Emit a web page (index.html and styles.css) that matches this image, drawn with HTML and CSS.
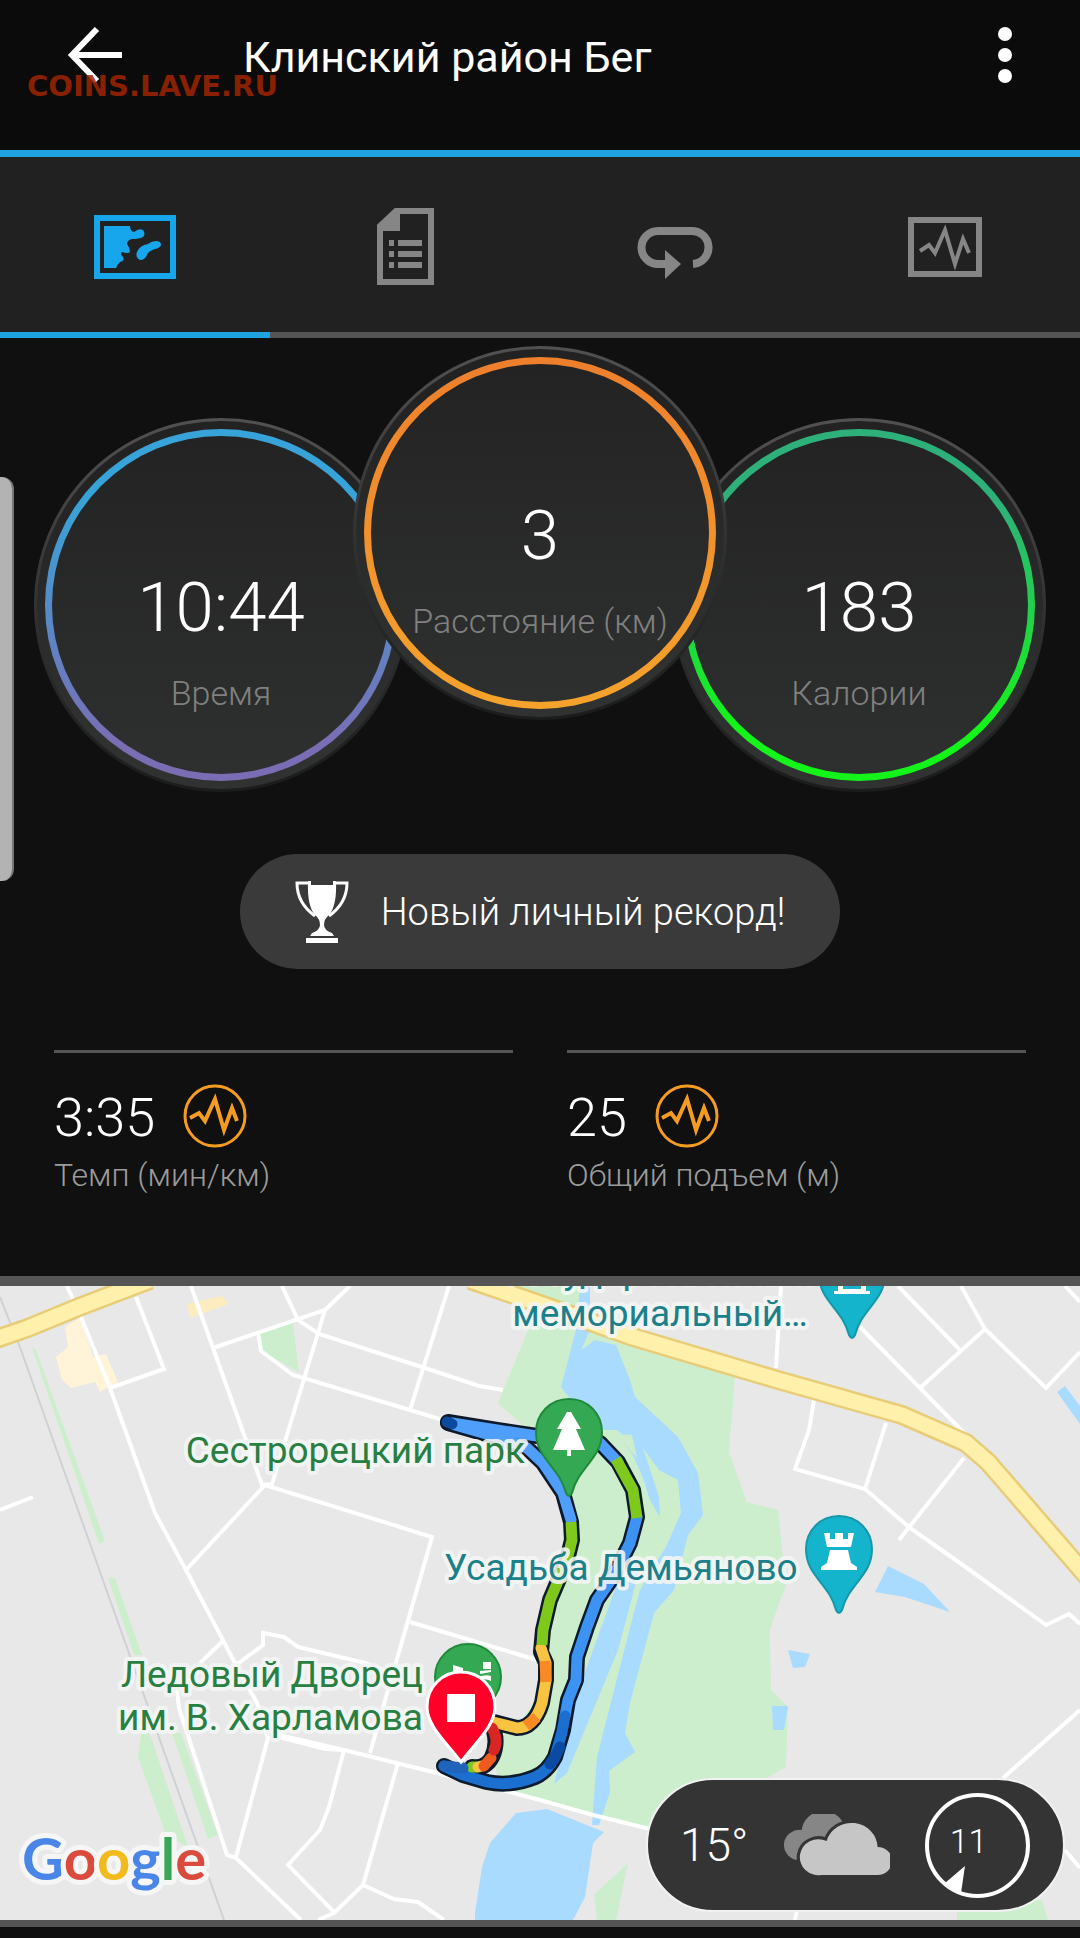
FILE: index.html
```html
<!DOCTYPE html>
<html lang="ru">
<head>
    <meta charset="UTF-8">
    <meta name="viewport" content="width=device-width, initial-scale=1.0">
    <title>Клинский район Бег</title>
    <link rel="stylesheet" href="styles.css">
</head>
<body>
    <header class="header">
        <button class="icon-button" aria-label="Назад">
            <svg width="56" height="56" viewBox="0 0 56 56" fill="none" stroke="#fff" stroke-width="6">
                <path d="M30 2L5 28L30 54M5 28H55"/>
            </svg>
        </button>
        <h1 class="title">Клинский район Бег</h1>
        <button class="icon-button" aria-label="Меню">
            <svg width="14" height="56" viewBox="0 0 14 56" fill="#fff">
                <circle cx="7" cy="7" r="7"/>
                <circle cx="7" cy="28" r="7"/>
                <circle cx="7" cy="49" r="7"/>
            </svg>
        </button>
        <span class="watermark">COINS.LAVE.RU</span>
    </header>

    <nav class="tabs">
        <button class="tab active" aria-label="Карта">
            <svg width="82" height="64" viewBox="0 0 82 64">
                <rect x="3" y="3" width="76" height="58" fill="none" stroke="currentColor" stroke-width="6"/>
                <path fill="currentColor" d="M10 11H36Q36 16 40 17Q45 13 49 15Q52 19 49 22Q45 24 38 24Q33 25 33 29Q36 33 36 37Q34 39 28 37Q26 39 29 42Q31 46 26 47Q23 50 22 53H10Z"/>
                <path fill="currentColor" d="M62 26Q67 26 67 30Q66 33 61 34Q54 36 53 40Q51 45 46 45Q41 42 43 37Q46 30 54 29Q58 26 62 26Z"/>
            </svg>
        </button>
        <button class="tab" aria-label="Статистика">
            <svg width="57" height="77" viewBox="0 0 57 77">
                <path fill="none" stroke="currentColor" stroke-width="6" d="M19 3H54V74H3V18Z"/>
                <path fill="currentColor" d="M18 2H23V23H1V18Z"/>
                <path fill="none" stroke="currentColor" stroke-width="6" d="M12 35H17M21 35H45M12 46H17M21 46H45M12 57H17M21 57H45"/>
            </svg>
        </button>
        <button class="tab" aria-label="Круги">
            <svg width="77" height="64" viewBox="1 -12 77 64">
                <path fill="none" stroke="currentColor" stroke-width="8" d="M35 37H22A16 16 0 0 1 22 4H55A16 16 0 0 1 57 37"/>
                <path fill="currentColor" d="M29 23L45 37L29 52Z"/>
            </svg>
        </button>
        <button class="tab" aria-label="Графики">
            <svg width="74" height="60" viewBox="0 0 74 60">
                <rect x="3" y="3" width="68" height="54" fill="none" stroke="currentColor" stroke-width="6"/>
                <path fill="none" stroke="currentColor" stroke-width="4" d="M12 34L21 28L27 36L37 13L47 47L55 22L61 36"/>
            </svg>
        </button>
    </nav>

    <main>
        <section class="gauges">
            <div class="gauge time">
                <div class="ring"></div>
                <div class="gauge-value">10:44</div>
                <div class="gauge-label">Время</div>
            </div>
            <div class="gauge distance">
                <div class="ring"></div>
                <div class="gauge-value">3</div>
                <div class="gauge-label">Расстояние (км)</div>
            </div>
            <div class="gauge calories">
                <div class="ring"></div>
                <div class="gauge-value">183</div>
                <div class="gauge-label">Калории</div>
            </div>
        </section>

        <button class="record">
            <svg width="54" height="62" viewBox="0 0 54 62">
                <path fill="none" stroke="#fff" stroke-width="3" d="M15 2H2Q2 22 20 35M39 2H52Q52 22 34 35"/>
                <path fill="#fff" d="M13 0H16V4H38V0H41Q42 25 34 34Q29 38 29 44Q29 49 37 52L39 55H15L17 52Q25 49 25 44Q25 38 20 34Q12 25 13 0Z"/>
                <rect fill="#fff" x="11" y="57" width="32" height="5"/>
            </svg>
            Новый личный рекорд!
        </button>

        <section class="metrics">
            <div class="metric">
                <div class="metric-row">
                    <span class="metric-value">3:35</span>
                    <svg width="64" height="64" viewBox="0 0 64 64" fill="none" stroke="#f59c20" stroke-width="3">
                        <circle cx="32" cy="32" r="30"/>
                        <path stroke-width="4" d="M7 34L16 29L22 37L32 15L41 46L49 24L54 37"/>
                    </svg>
                </div>
                <div class="metric-label">Темп (мин/км)</div>
            </div>
            <div class="metric">
                <div class="metric-row">
                    <span class="metric-value">25</span>
                    <svg width="64" height="64" viewBox="0 0 64 64" fill="none" stroke="#f59c20" stroke-width="3">
                        <circle cx="32" cy="32" r="30"/>
                        <path stroke-width="4" d="M7 34L16 29L22 37L32 15L41 46L49 24L54 37"/>
                    </svg>
                </div>
                <div class="metric-label">Общий подъем (м)</div>
            </div>
        </section>

        <section class="map">
            <svg class="map-canvas" viewBox="0 1286 1080 634">
                <defs>
                    <path id="pin" d="M0 -33C19 -33 33 -18 33 0C33 27 10 34 3 61Q0 67 -3 61C-10 34 -33 27 -33 0C-33 -18 -19 -33 0 -33Z"/>
                </defs>

                <!-- buildings and parks -->
                <g fill="#fff4d8">
                    <path d="M65 1327L81 1317L93 1357L106 1354L118 1382L100 1392L95 1382L71 1388L62 1380L56 1357L68 1347Z"/>
                    <path fill="#fcecc0" d="M187 1304L222 1296L229 1304L190 1318Z"/>
                </g>
                <g fill="#cdeecd">
                    <path d="M260 1333L293 1323L299 1372L261 1351Z"/>
                    <path d="M32 1347L36 1350L105 1541L99 1544Z"/>
                    <path d="M108 1578L115 1578L142 1655L134 1655Z"/>
                    <path d="M143 1720L152 1740L188 1847L166 1835L138 1757Z"/>
                    <path d="M172 1733L181 1733L218 1835L208 1839Z"/>
                    <path d="M518 1286H581V1312L540 1297Z"/>
                    <path d="M530 1325L600 1320L735 1372V1377L729 1452L747 1502L778 1510L786 1587L779 1603L770 1630L771 1690L788 1707L786 1767L760 1782L700 1840L647 1828L500 1789L490 1740L520 1722L543 1690L541 1640L570 1540L572 1510L555 1465L520 1423L498 1403Z"/>
                    <path d="M628 1863L616 1920H597L594 1895Z"/>
                    <path d="M957 1900H1042L1048 1920H957Z"/>
                </g>

                <!-- water -->
                <g fill="#a9daff">
                    <path d="M580 1286H590V1330L581 1350L595 1340L616 1345L630 1380L635 1397L678 1437L698 1473L703 1515L688 1535L674 1590L654 1613L630 1703L625 1733L635 1752L609 1771L610 1792L599 1825H592L597 1757L632 1620L640 1590L667 1545L681 1513L678 1480L659 1470L643 1448L659 1497L660 1517L650 1500L643 1478L633 1455L617 1434L631 1434L637 1446L617 1430L600 1430L569 1397L561 1387L576 1330Z"/>
                    <path d="M622 1570L642 1560L618 1650L567 1773L554 1784L575 1700Z"/>
                    <path d="M547 1809L516 1813L490 1843L482 1867L475 1913V1920H573L585 1897L593 1843L604 1832Z"/>
                    <path d="M888 1566L924 1584L950 1612L905 1597L875 1592Z"/>
                    <path d="M788 1650L810 1654L805 1667L793 1668Z"/>
                    <path d="M772 1706H788L784 1730H773Z"/>
                    <path d="M1065 1386L1080 1406V1424L1057 1392Z"/>
                </g>
                <path fill="#cdeecd" d="M616 1434L632 1435L637 1458Z"/>

                <!-- railway -->
                <path fill="none" stroke="#cfd1d4" stroke-width="2" d="M0 1297L21 1350L224 1920"/>

                <!-- streets -->
                <g fill="none" stroke="#fff" stroke-width="4">
                    <path d="M67 1286L81 1317L110 1388L155 1513L186 1570L236 1665L257 1703L268 1738L236 1857"/>
                    <path d="M136 1297L164 1369L110 1388"/>
                    <path d="M191 1286L213 1348L262 1485L272 1484L325 1310"/>
                    <path d="M213 1348L325 1310L350 1286"/>
                    <path d="M282 1286L298 1320L319 1334L425 1368L479 1386L503 1390"/>
                    <path d="M258 1333L261 1351L293 1375L410 1410L446 1421"/>
                    <path d="M449 1286L410 1410"/>
                    <path d="M186 1570L265 1485L432 1537L370 1753"/>
                    <path d="M0 1510L33 1497"/>
                    <path d="M224 1640L200 1663"/>
                    <path d="M410 1622L537 1660"/>
                    <path d="M236 1665L263 1645V1633L284 1637L298 1647L365 1663L395 1675"/>
                    <path d="M177 1690L179 1708L227 1855L236 1858L301 1920"/>
                    <path d="M279 1735L344 1750L437 1773L540 1800L593 1815L650 1829"/>
                    <path d="M279 1737L325 1749L344 1750L329 1807L320 1830L288 1865L334 1912"/>
                    <path d="M398 1763L363 1885L334 1913L318 1920"/>
                    <path d="M363 1885L394 1899L418 1902L444 1920"/>
                    <path d="M781 1286L776 1368"/>
                    <path d="M898 1286L961 1351"/>
                    <path d="M961 1286L985 1329L920 1388"/>
                    <path d="M860 1327L920 1388L968 1437"/>
                    <path d="M985 1329L1046 1388L1080 1352"/>
                    <path d="M1065 1286L1080 1302"/>
                    <path d="M814 1400L809 1430L795 1469L865 1489L910 1528L960 1563L1046 1625L1069 1614L1080 1624"/>
                    <path d="M886 1423L865 1489"/>
                    <path d="M964 1458L899 1540"/>
                    <path d="M1080 1710L1003 1778"/>
                    <path d="M1065 1850L1080 1868"/>
                    <path d="M797 1910L795 1920"/>
                </g>

                <!-- highways -->
                <g fill="none" stroke="#e9cc78" stroke-width="20">
                    <path d="M-10 1341L28 1328L79 1307L150 1280"/>
                    <path d="M470 1280L540 1304L633 1337L778 1380L902 1415L966 1443L988 1462L1090 1580"/>
                </g>
                <g fill="none" stroke="#fff0ab" stroke-width="15">
                    <path d="M-10 1341L28 1328L79 1307L150 1280"/>
                    <path d="M470 1280L540 1304L633 1337L778 1380L902 1415L966 1443L988 1462L1090 1580"/>
                </g>

                <!-- track -->
                <g fill="none" stroke-linejoin="round" stroke-linecap="round">
                    <g stroke="#0d1a2b" stroke-width="16">
                        <path d="M448 1422L497 1430L537 1436L600 1443L618 1462L633 1490L637 1517L630 1543L613 1577L597 1600L587 1627L577 1657L576 1680L568 1700L563 1730L555 1757Q547 1772 535 1777Q510 1787 487 1782L463 1775L444 1766"/>
                        <path d="M448 1423L497 1437L527 1448L543 1463L563 1493L571 1522L572 1540L567 1560L550 1600L543 1630L541 1652L546 1663V1680L542 1703Q534 1728 517 1728L490 1721Q500 1740 492 1757Q486 1769 472 1767"/>
                    </g>
                    <g stroke-width="11">
                        <path stroke="#4f9efa" d="M452 1423L497 1430L537 1436L600 1443L618 1462"/>
                        <path stroke="#3c93f2" d="M637 1517L630 1543L613 1577L597 1600L587 1627L577 1657L576 1680L568 1700L565 1716"/>
                        <path stroke="#1a6fd0" d="M565 1716L562 1732L555 1757Q547 1772 535 1777Q510 1787 487 1782L463 1775L444 1766"/>
                        <path stroke="#0b4aa2" d="M560 1747L555 1757L550 1764"/>
                        <path stroke="#4f9efa" d="M455 1425L497 1437L527 1448L543 1463L563 1493L571 1520"/>
                        <path stroke="#7ec91c" stroke-linecap="butt" d="M616 1459L633 1490L637 1518"/>
                        <path stroke="#f8c340" d="M541 1648L546 1663V1680L542 1703Q534 1728 517 1728L493 1722"/>
                        <path stroke="#7ec91c" stroke-linecap="butt" d="M571 1522L572 1540L567 1560L550 1600L543 1630L542 1645"/>
                        <path stroke="#f98922" stroke-linecap="butt" d="M545 1661L546 1682M537 1717L526 1726"/>
                        <path stroke="#7ec91c" d="M472 1767H476"/>
                        <path stroke="#f8c340" d="M478 1767L482 1766"/>
                        <path stroke="#ee5a20" d="M484 1766L491 1758"/>
                        <path stroke="#d92624" d="M492 1728Q499 1740 494 1750"/>
                        <path stroke="#0b4a9e" d="M447 1422L452 1424"/>
                        <path stroke="#1f63ba" d="M444 1766L463 1768"/>
                    </g>
                </g>

                <!-- place pins -->
                <g class="place-label teal">
                    <text x="660" y="1283" text-anchor="middle">Государственный</text>
                    <text x="660" y="1326" text-anchor="middle">мемориальный…</text>
                    <text x="444" y="1580">Усадьба Демьяново</text>
                </g>
                <g class="place-label green">
                    <text x="525" y="1463" text-anchor="end">Сестрорецкий парк</text>
                    <text x="423" y="1687" text-anchor="end">Ледовый Дворец</text>
                    <text x="423" y="1730" text-anchor="end">им. В. Харламова</text>
                </g>
                <g transform="translate(852 1274)">
                    <use href="#pin" fill="#14b4cd" stroke="#1697a9" stroke-width="2"/>
                    <path fill="#fff" d="M-18 17H18V20H-18ZM-14 8H-9V15H9V8H14V17H-14Z"/>
                </g>
                <g transform="translate(839 1549)">
                    <use href="#pin" fill="#14b4cd" stroke="#1697a9" stroke-width="2"/>
                    <path fill="#fff" d="M-15 -16H-9V-10H-4V-16H4V-10H9V-16H15L12 -2H-12ZM-9 1H9L12 14L18 18V21H-18V18L-12 14Z"/>
                </g>
                <g transform="translate(569 1432)">
                    <use href="#pin" fill="#34a853" stroke="#208a3c" stroke-width="2"/>
                    <path fill="#fff" d="M-2 -20H2L12 -3H7L16 18H2V24H-2V18H-16L-7 -3H-12Z"/>
                </g>
                <circle cx="468" cy="1677" r="33" fill="#34a853" stroke="#208a3c" stroke-width="2"/>
                <path fill="#fff" d="M453 1665L463 1668V1673H453ZM483 1662H491V1669H483ZM480 1671L491 1670V1672L480 1674ZM478 1677Q486 1674 491 1676V1681Q486 1678 478 1680Z"/>
                <path fill="#ff0028" stroke="#fff" stroke-width="3" d="M461 1672C480 1672 495 1687 495 1707C495 1726 475 1743 461 1762C447 1743 427 1726 427 1707C427 1687 442 1672 461 1672Z"/>
                <rect x="447" y="1694" width="28" height="28" fill="#fff"/>

                <text class="google" x="22" y="1880"><tspan fill="#4a86e8">G</tspan><tspan fill="#d94b3d">o</tspan><tspan fill="#f2bb1d">o</tspan><tspan fill="#4a86e8">g</tspan><tspan fill="#3aa757">l</tspan><tspan fill="#d94b3d">e</tspan></text>
            </svg>

            <div class="weather">
                <span class="temperature">15°</span>
                <svg width="107" height="62" viewBox="1 0 103 62" preserveAspectRatio="none">
                    <path fill="#868686" d="M15 46A15 15 0 0 1 19 16A21 21 0 0 1 60 12L50 36L30 46Z"/>
                    <path fill="#c6c6c6" stroke="#343434" stroke-width="6" paint-order="stroke" d="M38 61A18 18 0 1 1 43 27A25 25 0 0 1 92 33A14 14 0 0 1 92 61Z"/>
                </svg>
                <div class="wind">
                    <span class="wind-speed">11</span>
                    <svg class="wind-arrow" width="22" height="28" viewBox="0 0 22 28"><path fill="#fff" d="M20 0L0 17L16 27Z"/></svg>
                </div>
            </div>
        </section>
    </main>

    <div class="edge-handle"></div>
</body>
</html>
```

FILE: styles.css
```css
* {
    box-sizing: border-box;
}
body {
    margin: 0;
    min-height: 100vh;
    background-color: #101010;
    color: #fff;
    font-family: Roboto, "Noto Sans", sans-serif;
}
button {
    padding: 0;
    border: none;
    background: none;
    color: inherit;
    font-family: inherit;
    cursor: pointer;
}
svg {
    display: block;
}

/* header */
.header {
    position: relative;
    display: flex;
    align-items: flex-start;
    height: 157px;
    padding: 27px 68px 0 67px;
    border-bottom: 7px solid #1fa3e0;
    background-color: #0b0b0b;
}
.title {
    flex: 1;
    margin: 0 0 0 120px;
    font-size: 43px;
    line-height: 60px;
    font-weight: 400;
}
.watermark {
    position: absolute;
    left: 27px;
    top: 69px;
    color: rgba(160, 36, 0, 0.86);
    font-family: "DejaVu Sans", sans-serif;
    font-size: 29px;
    line-height: 34px;
    font-weight: 700;
}

/* tabs */
.tabs {
    display: grid;
    grid-template-columns: repeat(4, 1fr);
    background-color: #212121;
}
.tab {
    display: flex;
    align-items: center;
    justify-content: center;
    height: 181px;
    padding-top: 4px;
    border-bottom: 6px solid #555;
    color: #868686;
}
.tab.active {
    border-color: #1fa3e0;
    color: #17a6ec;
}

/* round gauges */
.gauges {
    display: flex;
    justify-content: center;
    align-items: flex-end;
    padding-top: 8px;
}
.gauge {
    position: relative;
    width: 374px;
    height: 374px;
    padding-top: 146px;
    border-radius: 50%;
    background: linear-gradient(#222 10%, #303231 90%) padding-box, linear-gradient(#535051, #2c2d2d 60%, #1c1c1c) border-box;
    border: 3px solid transparent;
    text-align: center;
}
.ring {
    position: absolute;
    inset: 8px;
    border: 7px solid transparent;
    border-radius: 50%;
}
.time .ring {
    background: linear-gradient(#232323, #2e302f) padding-box, linear-gradient(#38a3d8 20%, #7b6db4 90%) border-box;
}
.distance {
    z-index: 1;
    margin: 0 -55px 72px;
}
.distance .ring {
    background: linear-gradient(#232323, #2e302f) padding-box, linear-gradient(#ee7f2d, #f5a32c) border-box;
}
.calories .ring {
    background: linear-gradient(#232323, #2e302f) padding-box, linear-gradient(#2eb07b 20%, #14f41a 85%) border-box;
}
.gauge-value,
.gauge-label {
    position: relative;
    font-weight: 300;
}
.gauge-value {
    font-size: 69px;
    line-height: 82px;
}
.gauge-label {
    margin-top: 24px;
    color: #808080;
    font-size: 34px;
    line-height: 40px;
}

/* personal record */
.record {
    display: flex;
    align-items: center;
    justify-content: center;
    gap: 32px;
    width: 600px;
    height: 115px;
    margin: 62px auto 81px;
    border-radius: 58px;
    background-color: #3a3a3a;
    font-size: 38px;
    font-weight: 300;
}

/* metrics */
.metrics {
    display: grid;
    grid-template-columns: 1fr 1fr;
    gap: 54px;
    padding: 0 54px 81px;
}
.metric {
    border-top: 3px solid #555;
    padding-top: 31px;
    font-weight: 300;
}
.metric-row {
    display: flex;
    align-items: center;
    gap: 28px;
    height: 64px;
}
.metric-value {
    padding-top: 4px;
    font-size: 54px;
    line-height: 64px;
}
.metric-label {
    margin-top: 7px;
    color: #9c9c9c;
    font-size: 32px;
    line-height: 40px;
}

/* map */
.map {
    position: relative;
    border-top: 10px solid #555;
    border-bottom: 7px solid #555;
    background-color: #e8e8e8;
}
.map-canvas {
    width: 100%;
    height: auto;
}
.place-label {
    font-size: 37px;
    stroke: #f4f6f5;
    stroke-opacity: 0.9;
    stroke-width: 8px;
    stroke-linejoin: round;
    paint-order: stroke;
}
.teal {
    fill: #1b8089;
}
.green {
    fill: #287f42;
}
.google {
    font-family: Lato, sans-serif;
    font-size: 58px;
    font-weight: 700;
    stroke: #f6f6f6;
    stroke-width: 10px;
    stroke-linejoin: round;
    paint-order: stroke;
}
.weather {
    position: absolute;
    right: 15px;
    bottom: 8px;
    display: flex;
    align-items: center;
    justify-content: space-between;
    width: 419px;
    height: 134px;
    padding: 0 33px 0 32px;
    border: 2px solid #f2f2f2;
    border-radius: 67px;
    background-color: #343434;
    font-weight: 300;
}
.temperature {
    font-size: 46px;
}
.wind {
    position: relative;
    width: 105px;
    height: 105px;
    border: 4px solid #fff;
    border-radius: 50%;
    text-align: center;
}
.wind-speed {
    display: block;
    margin-right: 18px;
    font-size: 34px;
    line-height: 88px;
}
.wind-arrow {
    position: absolute;
    left: 16px;
    bottom: 0;
}

/* edge panel handle */
.edge-handle {
    position: absolute;
    left: 0;
    top: 477px;
    width: 14px;
    height: 404px;
    border-right: 2px solid #777;
    border-radius: 0 12px 12px 0;
    background-color: #b3b3b3;
}
```
